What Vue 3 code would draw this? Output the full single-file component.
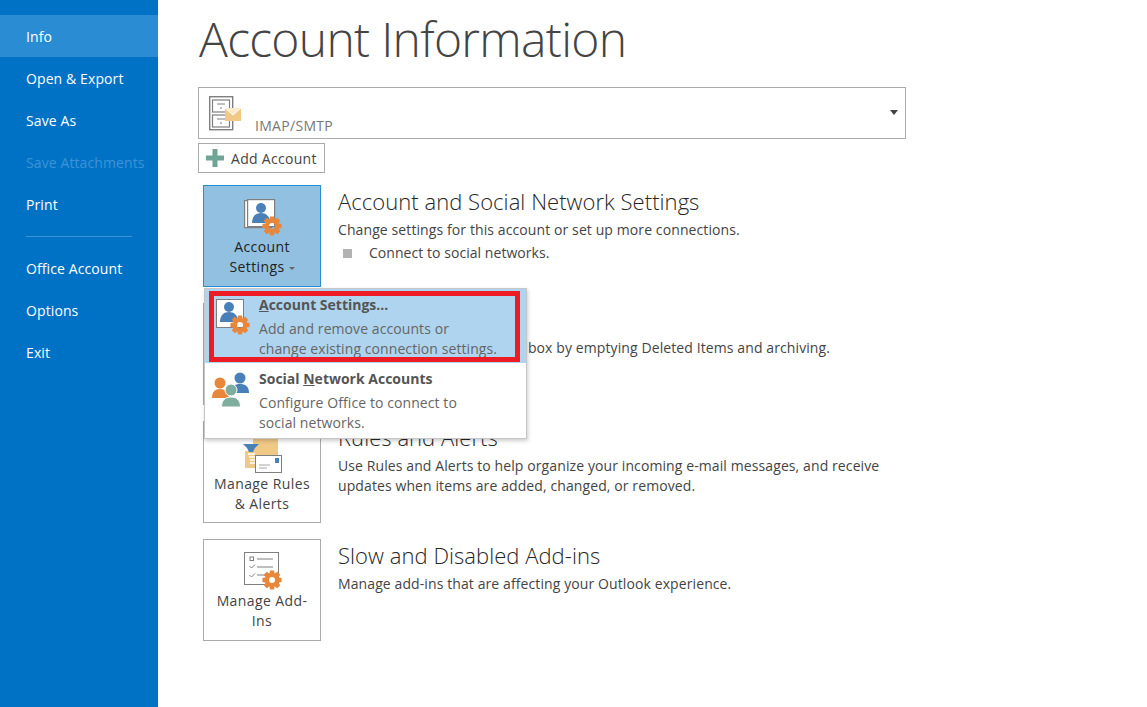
<script setup>
const navTop = [
  { label: 'Info', active: true },
  { label: 'Open & Export' },
  { label: 'Save As' },
  { label: 'Save Attachments', disabled: true },
  { label: 'Print' },
]
const navBottom = ['Office Account', 'Options', 'Exit']

// eight-tooth gear around 0,0, moved into place with a transform
const buildGear = () => {
  const pts = []
  for (let i = 0; i < 8; i++) {
    const a = (i * Math.PI) / 4
    for (const [r, d] of [[6.6, -0.42], [9.8, -0.21], [9.8, 0.21], [6.6, 0.42]]) {
      pts.push(`${(r * Math.cos(a + d)).toFixed(2)} ${(r * Math.sin(a + d)).toFixed(2)}`)
    }
  }
  return `M${pts.join('L')}zM0-3a3 3 0 1 0 0 6a3 3 0 1 0 0-6z`
}
const gearPath = buildGear()
</script>

<template>
  <div class="page">
    <aside class="nav">
      <div
        v-for="item in navTop"
        :key="item.label"
        class="nav-item"
        :class="{ active: item.active, disabled: item.disabled }"
      >
        {{ item.label }}
      </div>
      <div class="nav-sep"></div>
      <div v-for="label in navBottom" :key="label" class="nav-item">{{ label }}</div>
    </aside>

    <main class="main">
      <h1 class="title">Account Information</h1>

      <div class="account-select">
        <svg class="cabinet" width="34" height="36" viewBox="0 0 34 36">
          <rect x="0.700" y="0.700" width="23" height="33" fill="#fff" stroke="#7f7f7f" stroke-width="1.400" />
          <rect x="3.500" y="4" width="17" height="12" fill="#fff" stroke="#7f7f7f" stroke-width="1.200" />
          <rect x="3.500" y="19" width="17" height="12" fill="#fff" stroke="#7f7f7f" stroke-width="1.200" />
          <path d="M8 8h8M8 23h8" stroke="#7f7f7f" stroke-width="1" />
          <path d="M11 12h2M11 27h2" stroke="#7f7f7f" stroke-width="1.200" />
          <rect x="16" y="12" width="16" height="13" fill="#f0c987" />
          <path d="M16 12l8 7 8-7" fill="#fbe9c8" stroke="#fff" stroke-width="1" />
        </svg>
        <span class="account-name">IMAP/SMTP</span>
        <span class="caret"></span>
      </div>

      <button class="add-account">
        <svg width="18" height="18" viewBox="0 0 18 18">
          <path d="M6.500 0h5v6.500h6.500v5h-6.500v6.500h-5v-6.500h-6.500v-5h6.500z" fill="#6fa595" />
        </svg>
        <span>Add Account</span>
      </button>

      <section class="group">
        <div class="tile selected">
          <svg class="tile-icon" width="39" height="38" viewBox="0 0 39 38">
            <rect x="1.600" y="2.600" width="27" height="27" fill="#fff" stroke="#7f7f7f" stroke-width="1.200" />
            <rect x="4.600" y="1.600" width="27" height="27" fill="#fff" stroke="#7f7f7f" stroke-width="1.200" />
            <circle cx="18" cy="10" r="5" fill="#4a80b8" />
            <path d="M9 25c0-7 4-10 9-10s9 3 9 10z" fill="#4a80b8" />
            <path :d="gearPath" fill="#e8873a" fill-rule="evenodd" transform="translate(29 28)" />
          </svg>
          <div class="tile-label">Account<br />Settings <span class="mini-caret"></span></div>
        </div>
        <div class="group-text">
          <h2>Account and Social Network Settings</h2>
          <p>Change settings for this account or set up more connections.</p>
          <div class="bullet-row"><span class="bullet"></span>Connect to social networks.</div>
        </div>
      </section>

      <section class="group">
        <div class="tile"></div>
        <div class="group-text">
          <h2>Mailbox Cleanup</h2>
          <p>Manage the size of your mailbox by emptying Deleted Items and archiving.</p>
        </div>
      </section>

      <section class="group">
        <div class="tile">
          <svg class="tile-icon" width="40" height="39" viewBox="0 0 40 39">
            <path d="M3 17h8V5h25v29H3z" fill="#f0c987" />
            <path d="M1 10h16l-4 4-2 4H7l-2-4z" fill="#4a80b8" />
            <path d="M6 20h7M7 23h6M8 26h5M8 29h5" stroke="#fff" stroke-width="1.300" />
            <rect x="13.500" y="21.500" width="26" height="17" fill="#fff" stroke="#7f7f7f" />
            <rect x="33" y="24" width="4" height="5" fill="#4a80b8" />
            <path d="M17 31h11M17 34h8" stroke="#a6a6a6" />
          </svg>
          <div class="tile-label">Manage Rules<br />&amp; Alerts</div>
        </div>
        <div class="group-text">
          <h2>Rules and Alerts</h2>
          <p>Use Rules and Alerts to help organize your incoming e-mail messages, and receive<br />updates when items are added, changed, or removed.</p>
        </div>
      </section>

      <section class="group">
        <div class="tile">
          <svg class="tile-icon" width="39" height="38" viewBox="0 0 39 38">
            <rect x="1.500" y="0.500" width="34" height="32" fill="#fff" stroke="#7f7f7f" />
            <rect x="7" y="5" width="3.500" height="3.500" fill="none" stroke="#7f7f7f" />
            <path d="M14 7h16M14 15h16M14 23h8" stroke="#7f7f7f" />
            <path d="M6.500 14l2 2 3.500-3.500M6.500 23l2 2 3.500-3.500" fill="none" stroke="#7f7f7f" />
            <path :d="gearPath" fill="#e8873a" fill-rule="evenodd" transform="translate(29 28)" />
          </svg>
          <div class="tile-label">Manage Add-<br />Ins</div>
        </div>
        <div class="group-text">
          <h2>Slow and Disabled Add-ins</h2>
          <p>Manage add-ins that are affecting your Outlook experience.</p>
        </div>
      </section>

      <!-- dropdown open under the Account Settings tile -->
      <div class="menu">
        <div class="menu-item highlighted">
          <svg class="menu-icon" width="38" height="38" viewBox="0 0 38 38">
            <rect x="0.500" y="0.500" width="27" height="28" fill="#fff" stroke="#7f7f7f" />
            <circle cx="13" cy="8" r="5" fill="#4a80b8" />
            <path d="M4 23c0-7 4-10 9-10s9 3 9 10z" fill="#4a80b8" />
            <path :d="gearPath" fill="#e8873a" fill-rule="evenodd" transform="translate(24 26)" />
          </svg>
          <div class="menu-text">
            <div class="menu-title"><u>A</u>ccount Settings...</div>
            <div class="menu-desc">Add and remove accounts or<br />change existing connection settings.</div>
          </div>
          <div class="red-outline"></div>
        </div>
        <div class="menu-item">
          <svg class="menu-icon people" width="38" height="36" viewBox="0 0 38 36">
            <circle cx="28" cy="6" r="5.500" fill="#4a80b8" />
            <path d="M19 21c0-7 4-9 9-9s9 2 9 9z" fill="#4a80b8" />
            <circle cx="8" cy="11" r="5.500" fill="#e8873a" />
            <path d="M0 26c0-6 3-9 8-9s9 3 9 9z" fill="#e8873a" />
            <circle cx="19" cy="18" r="6" fill="#7fae9f" stroke="#fff" />
            <path d="M9.500 35c0-7 4-10 9.500-10s9.500 3 9.500 10z" fill="#7fae9f" stroke="#fff" />
          </svg>
          <div class="menu-text">
            <div class="menu-title">Social <u>N</u>etwork Accounts</div>
            <div class="menu-desc">Configure Office to connect to<br />social networks.</div>
          </div>
        </div>
      </div>
    </main>
  </div>
</template>

<style scoped>
.page {
  display: flex;
  width: 1147px;
  height: 707px;
  overflow: hidden;
  background: #ffffff;
  font-family: 'Open Sans', 'Noto Sans', sans-serif;
  color: #444444;
}

.nav {
  width: 158px;
  flex-shrink: 0;
  padding-top: 15px;
  box-sizing: border-box;
  background: #0072c6;
}

.nav-item {
  height: 42px;
  padding-left: 26px;
  line-height: 43px;
  font-size: 14px;
  letter-spacing: 0.1px;
  color: #ffffff;
}

.nav-item.active {
  background: #2a8dd4;
}

.nav-item.disabled {
  color: #3c94d6;
}

.nav-sep {
  width: 106px;
  height: 1px;
  margin: 11px 0 10px 26px;
  background: #3d96d8;
}

.main {
  position: relative;
  flex: 1;
  padding-left: 40px;
}

.title {
  height: 87px;
  margin: 0;
  padding-left: 1px;
  box-sizing: border-box;
  font-size: 48px;
  font-weight: 300;
  line-height: 77px;
  letter-spacing: -0.7px;
  color: #444444;
}

.account-select {
  position: relative;
  display: flex;
  width: 708px;
  height: 52px;
  box-sizing: border-box;
  border: 1px solid #ababab;
}

.cabinet {
  margin: 8px 0 0 10px;
}

.account-name {
  margin: 28px 0 0 12px;
  font-size: 14px;
  letter-spacing: 0.3px;
  color: #777777;
}

.caret {
  position: absolute;
  top: 22px;
  right: 7px;
  border-top: 5px solid #444444;
  border-left: 4.500px solid transparent;
  border-right: 4.500px solid transparent;
}

.add-account {
  display: flex;
  align-items: center;
  gap: 7px;
  width: 127px;
  height: 30px;
  margin: 4px 0 12px;
  padding: 0 0 0 7px;
  box-sizing: border-box;
  border: 1px solid #ababab;
  background: #ffffff;
  font-family: inherit;
  font-size: 14px;
  letter-spacing: 0.3px;
  color: #444444;
}

.group {
  display: flex;
  height: 102px;
  margin: 0 0 16px 5px;
}

.tile {
  display: flex;
  flex-direction: column;
  align-items: center;
  width: 118px;
  height: 102px;
  flex-shrink: 0;
  padding-top: 12px;
  box-sizing: border-box;
  border: 1px solid #ababab;
}

.tile.selected {
  border-color: #2a8dd4;
  background: #92c0e0;
}

.tile-icon {
  flex-shrink: 0;
}

.tile-label {
  margin-top: 1px;
  text-align: center;
  font-size: 14px;
  line-height: 20px;
  letter-spacing: 0.4px;
  color: #444444;
}

.selected .tile-label {
  color: #222222;
}

.mini-caret {
  display: inline-block;
  vertical-align: 2px;
  border-top: 3px solid #666666;
  border-left: 3px solid transparent;
  border-right: 3px solid transparent;
}

.group-text {
  padding-left: 17px;
}

.group-text h2 {
  margin: 0;
  padding-top: 1px;
  font-size: 22px;
  font-weight: 300;
  line-height: 30px;
  letter-spacing: 0.05px;
  color: #262626;
}

.group-text p {
  margin: 4px 0 0;
  font-size: 14px;
  line-height: 20px;
  letter-spacing: 0.1px;
}

.bullet-row {
  display: flex;
  align-items: center;
  margin-top: 3px;
  padding-left: 5px;
  font-size: 14px;
  line-height: 20px;
  letter-spacing: 0.05px;
}

.bullet {
  width: 9px;
  height: 9px;
  margin-right: 17px;
  background: #b2b2b2;
}

.menu {
  position: absolute;
  top: 288px;
  left: 46px;
  width: 323px;
  height: 151px;
  box-sizing: border-box;
  border: 1px solid #c6c6c6;
  background: #ffffff;
  box-shadow: 1px 2px 4px rgba(0, 0, 0, 0.2);
}

.menu-item {
  position: relative;
  display: flex;
  height: 74px;
  padding: 6px 0 0 7px;
  box-sizing: border-box;
  color: #666666;
}

.menu-item.highlighted {
  padding-left: 11px;
  background: #aed4ef;
}

.menu-icon {
  flex-shrink: 0;
  margin-top: 4px;
  margin-right: 5px;
}

.menu-icon.people {
  margin-top: 3px;
  margin-right: 9px;
}

.menu-title {
  font-size: 14px;
  font-weight: 700;
  line-height: 20px;
  letter-spacing: 0;
  color: #555555;
}

.menu-desc {
  margin-top: 4px;
  font-size: 14px;
  line-height: 20px;
  letter-spacing: 0.08px;
}

.red-outline {
  position: absolute;
  inset: 2px 6px 1px 4px;
  border: 5px solid #ed1c24;
}
</style>

<style>
html,
body {
  margin: 0;
  background: #ffffff;
}
</style>
